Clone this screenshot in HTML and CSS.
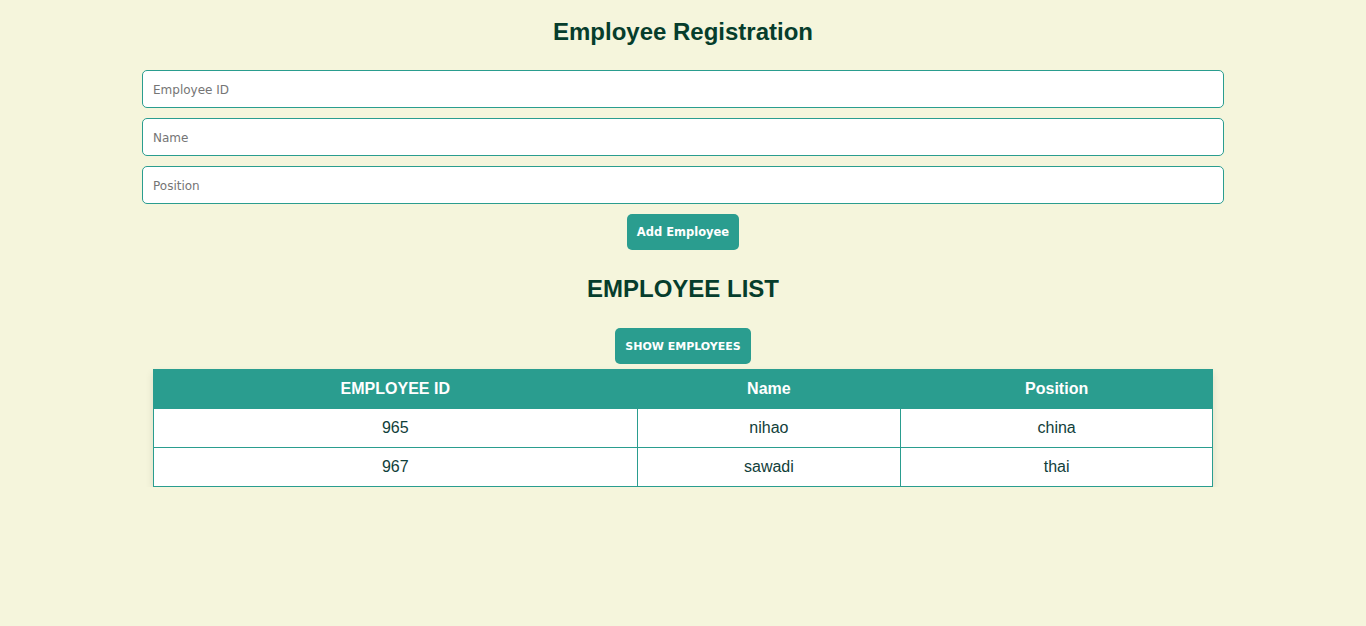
FILE: index.html
```html
<!DOCTYPE html>
<html>
<head>
<meta charset="utf-8">
<title>Employee Registration</title>
<link rel="stylesheet" href="styles.css">
</head>
<body>
<div class="page">
  <h1 class="title">Employee Registration</h1>
  <form class="form">
    <input class="field" type="text" placeholder="Employee ID">
    <input class="field" type="text" placeholder="Name">
    <input class="field" type="text" placeholder="Position">
    <button class="btn" type="button">Add Employee</button>
  </form>
  <h2 class="title list-title">EMPLOYEE LIST</h2>
  <button class="btn btn-show" type="button">SHOW EMPLOYEES</button>
  <table class="table">
    <thead>
      <tr><th class="c1">EMPLOYEE ID</th><th class="c2">Name</th><th class="c3">Position</th></tr>
    </thead>
    <tbody>
      <tr><td>965</td><td>nihao</td><td>china</td></tr>
      <tr><td>967</td><td>sawadi</td><td>thai</td></tr>
    </tbody>
  </table>
</div>
</body>
</html>
```
FILE: styles.css
```css
html, body {
  margin: 0;
  padding: 0;
  background: #f5f5dc;
}
.page {
  display: flex;
  flex-direction: column;
  align-items: center;
  padding-top: 18px;
}
.title {
  margin: 0;
  font-family: "Liberation Sans", Arial, sans-serif;
  font-weight: bold;
  font-size: 24px;
  line-height: 28px;
  color: #063d2c;
}
.form {
  display: flex;
  flex-direction: column;
  align-items: center;
  gap: 10px;
  margin-top: 24px;
}
.field {
  box-sizing: border-box;
  width: 1082px;
  height: 38px;
  padding: 1px 10px 0;
  border: 1px solid #2a9d8f;
  border-radius: 5px;
  background: #fff;
  font-family: "DejaVu Sans", Verdana, sans-serif;
  font-size: 12px;
  color: #333;
  outline: none;
}
.field::placeholder {
  color: #757575;
}
.btn {
  box-sizing: border-box;
  height: 36px;
  padding: 0 10px;
  border: none;
  border-radius: 5px;
  background: #2a9d8f;
  color: #fff;
  font-family: "DejaVu Sans", Verdana, sans-serif;
  font-weight: bold;
  font-size: 11.5px;
  cursor: pointer;
}
.list-title {
  margin-top: 25px;
}
.btn-show {
  margin-top: 25px;
  font-size: 11px;
}
.table {
  margin-top: 5px;
  width: 1060px;
  border-collapse: collapse;
  background: #fff;
  box-shadow: 0 4px 8px rgba(0, 0, 0, 0.1);
  font-family: "Liberation Sans", Arial, sans-serif;
  font-size: 16px;
}
.table th, .table td {
  border: 1px solid #2a9d8f;
  text-align: center;
  padding: 0 10px;
}
.table th {
  height: 39px;
  background: #2a9d8f;
  color: #fff;
  font-weight: bold;
}
.table td {
  height: 38px;
  color: #11403a;
}
.c1 { width: 484px; box-sizing: border-box; }
.c2 { width: 264px; box-sizing: border-box; }
.c3 { width: 312px; box-sizing: border-box; }
```
